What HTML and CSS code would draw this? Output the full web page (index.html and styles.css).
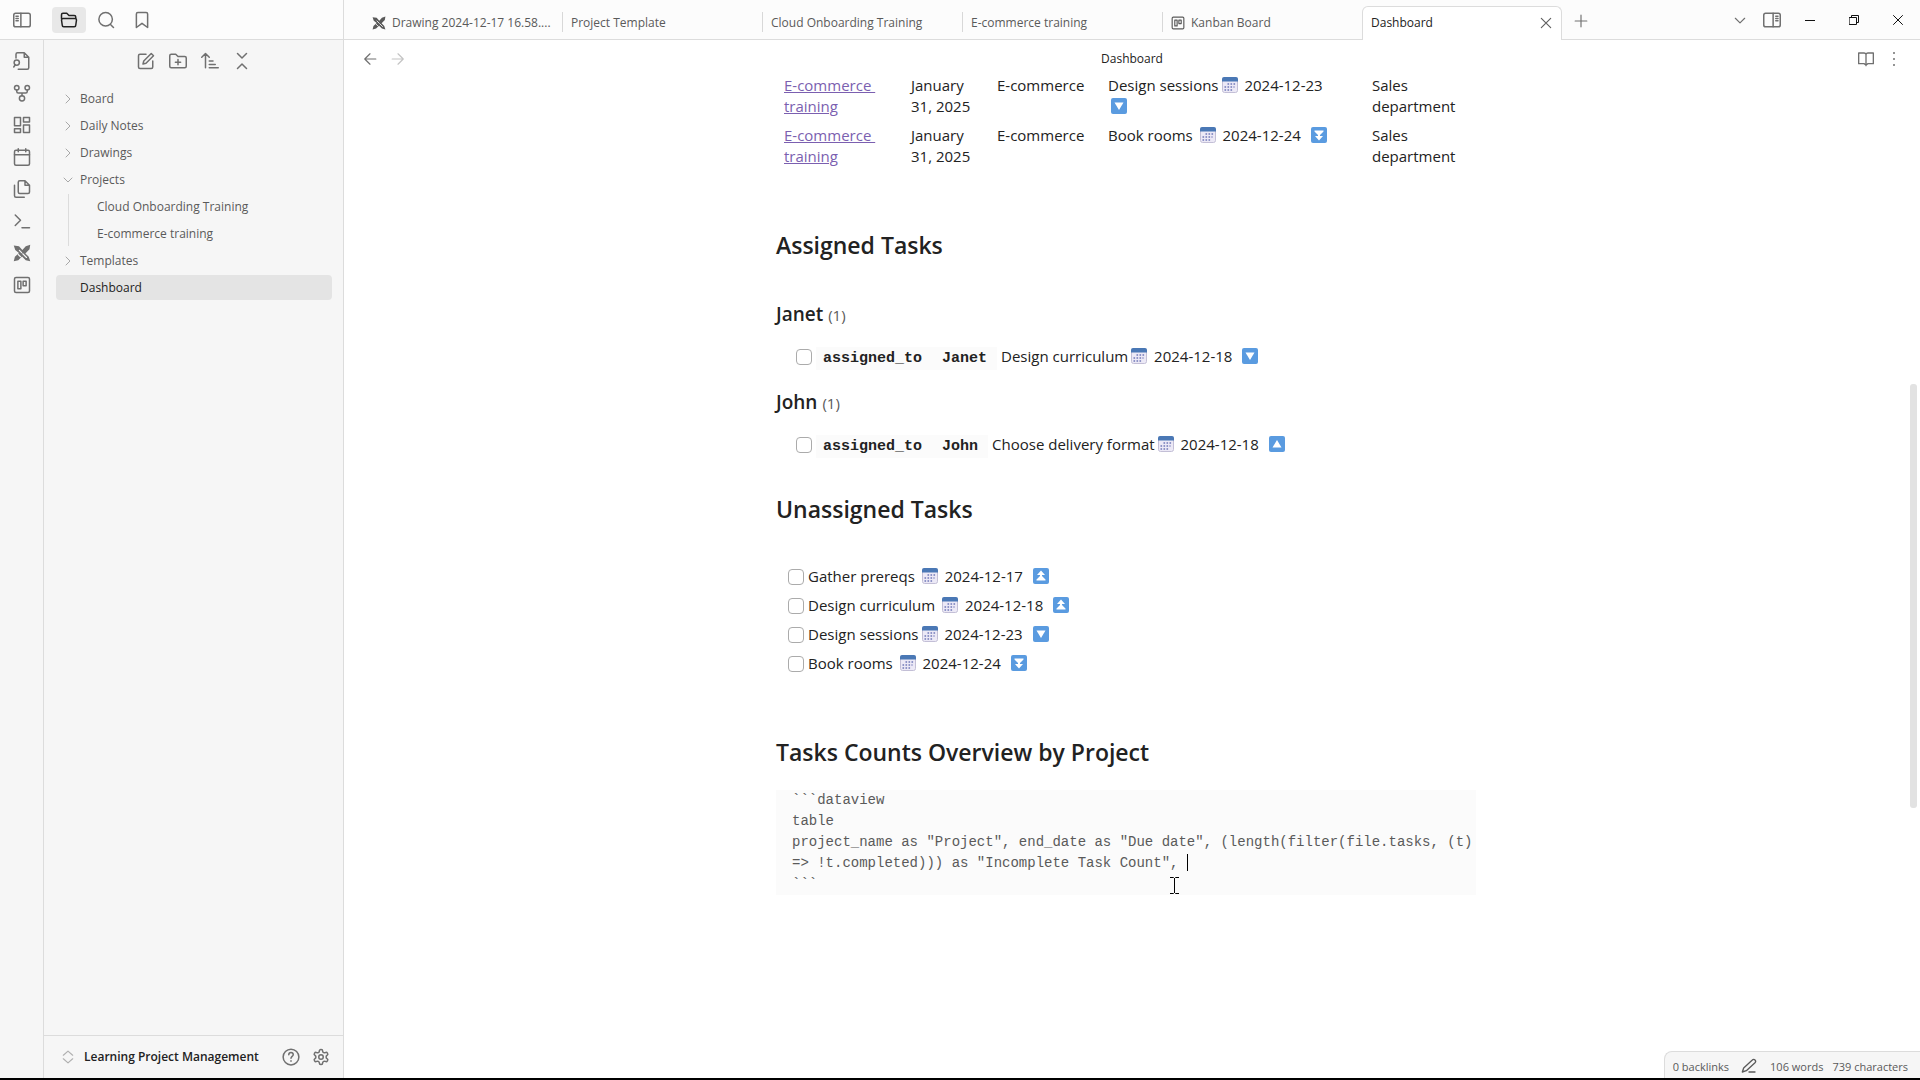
FILE: index.html
```html
<!DOCTYPE html>
<html lang="en">
<head>
<meta charset="utf-8">
<title>Dashboard</title>
<link rel="stylesheet" href="styles.css">
</head>
<body>
<svg class="defs" aria-hidden="true">
  <symbol id="excali" viewBox="0 0 24 24"><path fill="currentColor" stroke="none" d="M1 2l7 1 4.500 5L17 3l6-2-1 6-5.500 5.500L21 17l2 6-6-1.500-5-5-5 5L1 23l1.500-6L8 12 3 8z"/><path stroke="#f6f6f6" stroke-width="1.500" fill="none" d="M8.500 8.500l3 3M13 13l5 5M7 14l3 3"/></symbol>
  <symbol id="kanban" viewBox="0 0 24 24"><rect x="2" y="2" width="20" height="20" rx="2"/><rect x="6.500" y="7" width="4" height="10"/><rect x="13.500" y="7" width="4" height="6"/></symbol>
  <symbol id="chev" viewBox="0 0 24 24"><path d="M8 4l8 8-8 8"/></symbol>
  <symbol id="cal" viewBox="0 0 16 16"><rect x=".5" y="1" width="15" height="14.500" rx="2" fill="#ece9f6" stroke="#c3bfd6" stroke-width="1"/><path d="M0 4.500V2a2 2 0 0 1 2-2h12a2 2 0 0 1 2 2v2.500z" fill="#4a78b5" stroke="none"/><path d="M5.500 7h8M2.500 10h10M2.500 13h8" stroke="#6f78b8" stroke-width="1.600" stroke-dasharray="1.600 1.400" stroke-linecap="butt" fill="none"/></symbol>
  <symbol id="down" viewBox="0 0 16 16"><rect width="16" height="16" rx="2" fill="#5a9be0" stroke="none"/><path d="M3.500 4.500h9L8 12z" fill="#fff" stroke="none"/></symbol>
  <symbol id="up" viewBox="0 0 16 16"><rect width="16" height="16" rx="2" fill="#5a9be0" stroke="none"/><path d="M3.500 11.500h9L8 4z" fill="#fff" stroke="none"/></symbol>
  <symbol id="up2" viewBox="0 0 16 16"><rect width="16" height="16" rx="2" fill="#5a9be0" stroke="none"/><path d="M8 2.500l4 4.500H9v1l3.500 3.500v1h-9v-1L7 8V7H4z" fill="#fff" stroke="none"/></symbol>
  <symbol id="down2" viewBox="0 0 16 16"><rect width="16" height="16" rx="2" fill="#5a9be0" stroke="none"/><path d="M8 13.500l4-4.500H9V8l3.500-3.500v-1h-9v1L7 8v1H4z" fill="#fff" stroke="none"/></symbol>
</svg>

<header class="topbar">
  <div class="topbar-left">
    <button class="icon-btn cell" aria-label="Collapse sidebar"><svg class="i" viewBox="0 0 24 24"><rect x="1" y="3" width="22" height="18" rx="2.500"/><path d="M10.500 3v18M4 7h3M4 10h3M4 13h3"/></svg></button>
    <button class="icon-btn pill" aria-label="Files"><svg class="i" viewBox="0 0 24 24"><path d="M2 10V5a2 2 0 0 1 2-2h5l3 3h7a2 2 0 0 1 2 2v2M4 10h16a2 2 0 0 1 2 2l-1 7a2 2 0 0 1-2 2H5a2 2 0 0 1-2-2l-1-7a2 2 0 0 1 2-2z"/></svg></button>
    <button class="icon-btn" aria-label="Search"><svg class="i" viewBox="0 0 24 24"><circle cx="11.500" cy="11" r="9"/><path d="M18 18l4 4"/></svg></button>
    <button class="icon-btn" aria-label="Bookmarks"><svg class="i" viewBox="0 0 24 24"><path d="M4.500 4a2 2 0 0 1 2-2h11a2 2 0 0 1 2 2v18L12 16.500 4.500 22z"/></svg></button>
  </div>
  <nav class="tabs" aria-label="Open tabs">
    <button class="tab"><svg class="i s14" ><use href="#excali"/></svg><span class="tab-name">Drawing 2024-12-17 16.58....</span></button>
    <button class="tab"><span class="tab-name">Project Template</span></button>
    <button class="tab"><span class="tab-name">Cloud Onboarding Training</span></button>
    <button class="tab"><span class="tab-name">E-commerce training</span></button>
    <button class="tab"><svg class="i s14"><use href="#kanban"/></svg><span class="tab-name">Kanban Board</span></button>
    <button class="tab active"><span class="tab-name">Dashboard</span><svg class="i s14" viewBox="0 0 24 24"><path d="M4 4l16 16M20 4L4 20"/></svg></button>
    <button class="icon-btn" aria-label="New tab"><svg class="i s14" viewBox="0 0 24 24"><path d="M12 2v20M2 12h20"/></svg></button>
  </nav>
  <div class="window-tools">
    <button class="icon-btn narrow" aria-label="Tab list"><svg class="i s14" viewBox="0 0 24 24"><path d="M4 9l8 8 8-8"/></svg></button>
    <button class="icon-btn narrow" aria-label="Expand sidebar"><svg class="i" viewBox="0 0 24 24"><rect x="1" y="3" width="22" height="18" rx="2.500"/><path d="M13.500 3v18M17 7h3M17 10h3M17 13h3"/></svg></button>
    <button class="icon-btn win" aria-label="Minimize"><svg class="i s10" viewBox="0 0 10 10"><path d="M0 5.500h10"/></svg></button>
    <button class="icon-btn win" aria-label="Restore"><svg class="i s10" viewBox="0 0 10 10"><path d="M.5 2.500h7v7h-7zM2.500 2.500v-2h7v7h-2"/></svg></button>
    <button class="icon-btn win" aria-label="Close"><svg class="i s10" viewBox="0 0 10 10"><path d="M.5.5l9 9M9.500.5l-9 9"/></svg></button>
  </div>
</header>

<div class="workspace">
  <nav class="ribbon" aria-label="Ribbon">
    <button class="icon-btn" aria-label="Quick switcher"><svg class="i" viewBox="0 0 24 24"><path d="M4 8V3a2 2 0 0 1 2-2h9l6 6v14a2 2 0 0 1-2 2H7M15 1v6h6"/><circle cx="5" cy="14" r="3.500"/><path d="M3 17l-2 3"/></svg></button>
    <button class="icon-btn" aria-label="Graph view"><svg class="i" viewBox="0 0 24 24"><circle cx="5" cy="5" r="3"/><circle cx="19" cy="5" r="3"/><circle cx="12" cy="19" r="3.500"/><path d="M5 8v2a2 2 0 0 0 2 2h10a2 2 0 0 0 2-2V8M12 12v3.500"/></svg></button>
    <button class="icon-btn" aria-label="Canvas"><svg class="i" viewBox="0 0 24 24"><path d="M2 2h8v11H2zM14 2h8v6h-8zM14 12h8v10h-8zM2 17h8v5H2z"/></svg></button>
    <button class="icon-btn" aria-label="Daily note"><svg class="i" viewBox="0 0 24 24"><rect x="2" y="3" width="20" height="20" rx="2"/><path d="M2 9h20M7 1v4M17 1v4"/></svg></button>
    <button class="icon-btn" aria-label="Templates"><svg class="i" viewBox="0 0 24 24"><path d="M16 1H9a2 2 0 0 0-2 2v13a2 2 0 0 0 2 2h11a2 2 0 0 0 2-2V7zM16 1v6h6M2 7v14a2 2 0 0 0 2 2h11"/></svg></button>
    <button class="icon-btn" aria-label="Command palette"><svg class="i" viewBox="0 0 24 24"><path d="M3 4l7 7-7 7M12 21h10"/></svg></button>
    <button class="icon-btn" aria-label="Excalidraw"><svg class="i"><use href="#excali"/></svg></button>
    <button class="icon-btn" aria-label="Kanban"><svg class="i"><use href="#kanban"/></svg></button>
  </nav>

  <aside class="sidebar">
    <div class="nav-actions">
      <button class="icon-btn" aria-label="New note"><svg class="i" viewBox="0 0 24 24"><path d="M12 3H4a2 2 0 0 0-2 2v15a2 2 0 0 0 2 2h15a2 2 0 0 0 2-2v-8M19 2l3 3-10 10-4 1 1-4z"/></svg></button>
      <button class="icon-btn" aria-label="New folder"><svg class="i" viewBox="0 0 24 24"><path d="M1 5a2 2 0 0 1 2-2h6l3 3h9a2 2 0 0 1 2 2v11a2 2 0 0 1-2 2H3a2 2 0 0 1-2-2zM12 10v7M8.500 13.500h7"/></svg></button>
      <button class="icon-btn" aria-label="Sort"><svg class="i" viewBox="0 0 24 24"><path d="M1 7l5-5 5 5M6 2v19M11 12h5M11 16.500h8M11 21h12"/></svg></button>
      <button class="icon-btn" aria-label="Collapse all"><svg class="i" viewBox="0 0 24 24"><path d="M6 2l6 6 6-6M6 22l6-6 6 6"/></svg></button>
    </div>
    <div class="tree">
      <a class="row" href="#"><svg class="i s12"><use href="#chev"/></svg>Board</a>
      <a class="row" href="#"><svg class="i s12"><use href="#chev"/></svg>Daily Notes</a>
      <a class="row" href="#"><svg class="i s12"><use href="#chev"/></svg>Drawings</a>
      <a class="row" href="#"><svg class="i s12 open"><use href="#chev"/></svg>Projects</a>
      <div class="children">
        <a class="row child" href="#">Cloud Onboarding Training</a>
        <a class="row child" href="#">E-commerce training</a>
      </div>
      <a class="row" href="#"><svg class="i s12"><use href="#chev"/></svg>Templates</a>
      <a class="row leaf selected" href="#">Dashboard</a>
    </div>
    <div class="vault">
      <svg class="i s14 faint" viewBox="0 0 24 24"><path d="M4 9l8-7 8 7M4 15l8 7 8-7"/></svg>
      <span class="vault-name">Learning Project Management</span>
      <button class="icon-btn" aria-label="Help"><svg class="i" viewBox="0 0 24 24"><circle cx="12" cy="12" r="10.500"/><path d="M9 9a3 3 0 0 1 6 0c0 2-3 2.500-3 4.500M12 17v.5"/></svg></button>
      <button class="icon-btn" aria-label="Settings"><svg class="i" viewBox="0 0 24 24"><path d="M12.220 2h-.44a2 2 0 0 0-2 2v.18a2 2 0 0 1-1 1.730l-.43.25a2 2 0 0 1-2 0l-.15-.08a2 2 0 0 0-2.730.730l-.22.380a2 2 0 0 0 .730 2.730l.15.1a2 2 0 0 1 1 1.720v.510a2 2 0 0 1-1 1.740l-.15.090a2 2 0 0 0-.730 2.730l.22.380a2 2 0 0 0 2.730.730l.15-.08a2 2 0 0 1 2 0l.43.25a2 2 0 0 1 1 1.730V20a2 2 0 0 0 2 2h.44a2 2 0 0 0 2-2v-.18a2 2 0 0 1 1-1.730l.43-.25a2 2 0 0 1 2 0l.15.08a2 2 0 0 0 2.730-.730l.22-.390a2 2 0 0 0-.730-2.730l-.15-.08a2 2 0 0 1-1-1.740v-.5a2 2 0 0 1 1-1.740l.15-.090a2 2 0 0 0 .730-2.730l-.22-.380a2 2 0 0 0-2.730-.730l-.15.08a2 2 0 0 1-2 0l-.43-.25a2 2 0 0 1-1-1.730V4a2 2 0 0 0-2-2z"/><circle cx="12" cy="12" r="3"/></svg></button>
    </div>
  </aside>

  <main class="pane">
    <div class="view-header">
      <div class="history">
        <button class="icon-btn narrow" aria-label="Back"><svg class="i s14" viewBox="0 0 24 24"><path d="M12 3l-9 9 9 9M3 12h19"/></svg></button>
        <button class="icon-btn narrow" aria-label="Forward" disabled><svg class="i s14" viewBox="0 0 24 24"><path d="M12 3l9 9-9 9M21 12H2"/></svg></button>
      </div>
      <span class="view-title">Dashboard</span>
      <div class="view-actions">
        <button class="icon-btn narrow" aria-label="Reading view"><svg class="i s16" viewBox="0 0 24 24"><path d="M12 5v17M1 3h8a3 3 0 0 1 3 2 3 3 0 0 1 3-2h8v16h-8l-3 2-3-2H1z"/></svg></button>
        <button class="icon-btn narrow" aria-label="More options"><svg class="i s16" viewBox="0 0 24 24"><path stroke-width="3" d="M12 3v.1M12 12v.1M12 21v.1"/></svg></button>
      </div>
    </div>

    <div class="scroller">
      <article class="note">
        <table class="data">
          <colgroup><col class="c-file"><col class="c-date"><col class="c-name"><col class="c-task"><col></colgroup>
          <tbody>
            <tr><td><a class="link" href="#">E-commerce&nbsp;<br>training</a></td><td>January 31, 2025</td><td>E-commerce</td><td>Design sessions<svg class="emoji"><use href="#cal"/></svg> 2024-12-23<br><svg class="emoji"><use href="#down"/></svg></td><td>Sales department</td></tr>
            <tr><td><a class="link" href="#">E-commerce&nbsp;<br>training</a></td><td>January 31, 2025</td><td>E-commerce</td><td>Book rooms <svg class="emoji"><use href="#cal"/></svg> 2024-12-24 <svg class="emoji prio"><use href="#down2"/></svg></td><td>Sales department</td></tr>
          </tbody>
        </table>

        <section class="assigned">
          <h2>Assigned Tasks</h2>
          <div class="group">
            <h3>Janet <span class="count">(1)</span></h3>
            <label class="task"><input type="checkbox"><span><code class="key">assigned_to</code><code class="val">Janet</code>Design curriculum<svg class="emoji"><use href="#cal"/></svg> 2024-12-18 <svg class="emoji prio"><use href="#down"/></svg></span></label>
          </div>
          <div class="group">
            <h3>John <span class="count">(1)</span></h3>
            <label class="task"><input type="checkbox"><span><code class="key">assigned_to</code><code class="val">John</code>Choose delivery format<svg class="emoji"><use href="#cal"/></svg> 2024-12-18 <svg class="emoji prio"><use href="#up"/></svg></span></label>
          </div>
        </section>

        <section class="unassigned">
          <h2>Unassigned Tasks</h2>
          <div class="list">
            <label class="item"><input type="checkbox"><span>Gather prereqs <svg class="emoji"><use href="#cal"/></svg> 2024-12-17 <svg class="emoji prio"><use href="#up2"/></svg></span></label>
            <label class="item"><input type="checkbox"><span>Design curriculum <svg class="emoji"><use href="#cal"/></svg> 2024-12-18 <svg class="emoji prio"><use href="#up2"/></svg></span></label>
            <label class="item"><input type="checkbox"><span>Design sessions<svg class="emoji"><use href="#cal"/></svg> 2024-12-23 <svg class="emoji prio"><use href="#down"/></svg></span></label>
            <label class="item"><input type="checkbox"><span>Book rooms <svg class="emoji"><use href="#cal"/></svg> 2024-12-24 <svg class="emoji prio"><use href="#down2"/></svg></span></label>
          </div>
        </section>

        <section class="counts">
          <h2>Tasks Counts Overview by Project</h2>
          <pre class="code">```dataview
table
project_name as "Project", end_date as "Due date", (length(filter(file.tasks, (t)
=&gt; !t.completed))) as "Incomplete Task Count", <span class="caret"></span>
```</pre>
        </section>
      </article>
      <div class="scrollbar"><div class="thumb"></div></div>
    </div>

    <footer class="status">
      <span>0 backlinks</span>
      <svg class="i s16" viewBox="0 0 24 24"><path d="M12 21h9M17 3a2.800 2.800 0 0 1 4 4L8 19l-6 2 2-6z"/></svg>
      <span class="words">106 words</span>
      <span>739 characters</span>
    </footer>
    <svg class="pointer" viewBox="0 0 9 17"><path d="M0 .5h3.500l1 1 1-1H9M0 16.500h3.500l1-1 1 1H9M4.500 1v15"/></svg>
  </main>
</div>
</body>
</html>
```
FILE: styles.css
```css
* { box-sizing: border-box; }

body {
  margin: 0;
  height: 100vh;
  display: flex;
  flex-direction: column;
  border-bottom: 2px solid #000;
  background: #fff;
  color: #222;
  font: 15px/21px "Open Sans", "Noto Sans", sans-serif;
  overflow: hidden;
}

a { color: inherit; text-decoration: none; }

button {
  margin: 0;
  padding: 0;
  border: 0;
  background: none;
  color: inherit;
  font: inherit;
}

.defs { display: none; }

/* icons */
.i {
  width: 18px;
  height: 18px;
  flex: none;
  fill: none;
  stroke: currentColor;
  stroke-width: 2;
  stroke-linecap: round;
  stroke-linejoin: round;
}
.s16 { width: 16px; height: 16px; }
.s14 { width: 14px; height: 14px; }
.s12 { width: 12px; height: 12px; }
.s10 { width: 10px; height: 10px; stroke-width: 1; }
.faint { color: #b0b0b0; }

.icon-btn {
  width: 32px;
  height: 26px;
  flex: none;
  display: flex;
  align-items: center;
  justify-content: center;
  color: #707070;
}
.icon-btn:disabled { color: #c4c4c4; }
.narrow { width: 28px; }

/* top bar */
.topbar {
  flex: none;
  height: 40px;
  display: flex;
  border-bottom: 1px solid #dcdcdc;
  background: #fcfcfc;
}
.topbar-left {
  width: 344px;
  flex: none;
  display: flex;
  align-items: center;
  gap: 4px;
  border-right: 1px solid #dcdcdc;
}
.cell { width: 44px; margin-right: 4px; }
.pill {
  width: 34px;
  border-radius: 4px;
  background: #e8e8e8;
  color: #222;
}
.tabs {
  flex: 1;
  min-width: 0;
  display: flex;
  align-items: flex-end;
  padding-left: 18px;
}
.tab {
  width: 200px;
  min-width: 0;
  height: 33px;
  display: flex;
  align-items: center;
  gap: 6px;
  padding: 0 9px;
  color: #5a5a5a;
  font-size: 12px;
  line-height: 20px;
  text-align: left;
  background: linear-gradient(#d8d8d8, #d8d8d8) left 6px / 1px 20px no-repeat;
}
.tab:first-child { padding: 0 6px 0 10px; background: none; }
.tab-name { flex: 1; white-space: nowrap; overflow: hidden; }
.tab.active {
  height: 34px;
  margin-bottom: -1px;
  padding: 0 8px 2px;
  border: 1px solid #dcdcdc;
  border-bottom: 0;
  border-radius: 6px 6px 0 0;
  background: #fff;
  color: #222;
}
.tab.active .i { color: #606060; }
.tabs .icon-btn { width: 38px; height: 36px; }
.window-tools {
  flex: none;
  display: flex;
  align-items: center;
}
.window-tools .narrow { width: 32px; }
.win { width: 44px; color: #111; }

/* workspace */
.workspace { flex: 1; min-height: 0; display: flex; }
.ribbon {
  width: 44px;
  flex: none;
  display: flex;
  flex-direction: column;
  align-items: center;
  gap: 6px;
  padding-top: 8px;
  border-right: 1px solid #dcdcdc;
  background: #f6f6f6;
}
.sidebar {
  width: 300px;
  flex: none;
  display: flex;
  flex-direction: column;
  border-right: 1px solid #dcdcdc;
  background: #f6f6f6;
  color: #5a5a5a;
  font-size: 12px;
  line-height: 20px;
}
.nav-actions {
  display: flex;
  justify-content: center;
  padding: 8px 0 12px;
}
.tree {
  flex: 1;
  display: flex;
  flex-direction: column;
  gap: 2px;
  padding: 0 11px 0 12px;
}
.row {
  height: 25px;
  display: flex;
  align-items: center;
  gap: 6px;
  padding-left: 6px;
  border-radius: 4px;
}
.row .i { color: #a8a8a8; }
.open { transform: rotate(90deg); }
.children {
  display: flex;
  flex-direction: column;
  gap: 2px;
  margin-left: 12px;
  border-left: 1px solid #dcdcdc;
}
.child { padding-left: 28px; }
.leaf { padding-left: 24px; }
.selected { background: #e4e4e4; color: #222; }
.vault {
  flex: none;
  height: 43px;
  display: flex;
  align-items: center;
  padding: 0 7px 0 17px;
  border-top: 1px solid #dcdcdc;
}
.vault-name {
  flex: 1;
  padding-left: 9px;
  color: #222;
  font-weight: 600;
  white-space: nowrap;
}
.vault .icon-btn { width: 30px; }

/* note pane */
.pane {
  flex: 1;
  min-width: 0;
  position: relative;
  display: flex;
  flex-direction: column;
}
.view-header {
  flex: none;
  height: 31px;
  display: flex;
  align-items: center;
  justify-content: space-between;
  padding: 6px 12px 0;
}
.history, .view-actions { display: flex; flex: 1; }
.view-actions { justify-content: flex-end; }
.view-title { font-size: 12px; }
.scroller {
  flex: 1;
  min-height: 0;
  display: flex;
  overflow: hidden;
}
.note {
  width: 100%;
  max-width: 700px;
  margin: 0 auto;
}
.scrollbar { width: 12px; flex: none; padding: 313px 3px 0 2px; }
.thumb { height: 424px; border-radius: 3px; background: #e2e2e2; }

.data {
  width: 100%;
  table-layout: fixed;
  border-collapse: collapse;
}
.data td { padding: 4px 8px; vertical-align: top; }
.c-file { width: 127px; }
.c-date { width: 86px; }
.c-name { width: 111px; }
.c-task { width: 264px; }
.link { color: #7b5fb0; text-decoration: underline; }

h2, h3 { margin: 0; font-weight: 600; }
h2 { font-size: 23px; line-height: 32px; }
h3 { font-size: 19px; line-height: 24px; }
.count { color: #5a5a5a; font-size: 15px; font-weight: 400; }

.assigned { padding-top: 58px; }
.assigned h2 { margin-bottom: 41px; }
.group { padding-bottom: 21px; }
.task {
  display: flex;
  align-items: center;
  gap: 4px;
  height: 24px;
  margin: 18px 0 0 20px;
}
.emoji {
  width: 16px;
  height: 16px;
  margin: 0 3px;
  vertical-align: -2px;
}
.prio { margin-left: 6px; }
input[type="checkbox"] {
  appearance: none;
  width: 16px;
  height: 16px;
  flex: none;
  margin: 0;
  border: 1px solid #ababab;
  border-radius: 4px;
  background: #fff;
}
.key, .val {
  padding: 3px 10px 3px 7px;
  background: #fbfbfb;
  font: 600 15px/21px "Liberation Mono", monospace;
}
.val { padding-left: 10px; margin-right: 4px; }

.unassigned { padding-top: 15px; }
.list { padding: 37px 0 0 12px; }
.item {
  height: 29px;
  display: flex;
  align-items: center;
  gap: 4px;
}

.counts { padding-top: 58px; }
.code {
  margin: 22px 0 0;
  padding: 0 0 0 16px;
  background: #fbfbfb;
  color: #5a5a5a;
  font: 14px/21px "Liberation Mono", monospace;
}
.caret {
  display: inline-block;
  width: 1px;
  height: 17px;
  background: #000;
  vertical-align: -4px;
}

.status {
  position: absolute;
  right: 0;
  bottom: 0;
  height: 27px;
  display: flex;
  align-items: center;
  padding: 2px 12px 0 8px;
  border: 1px solid #dcdcdc;
  border-width: 1px 0 0 1px;
  border-radius: 8px 0 0;
  background: #f6f6f6;
  color: #5a5a5a;
  font-size: 11px;
}
.status .i { margin: 0 13px 0 12px; }
.words { margin-right: 9px; }
.pointer {
  position: absolute;
  left: 826px;
  top: 837px;
  width: 9px;
  height: 17px;
  fill: none;
  stroke: #000;
}
```
